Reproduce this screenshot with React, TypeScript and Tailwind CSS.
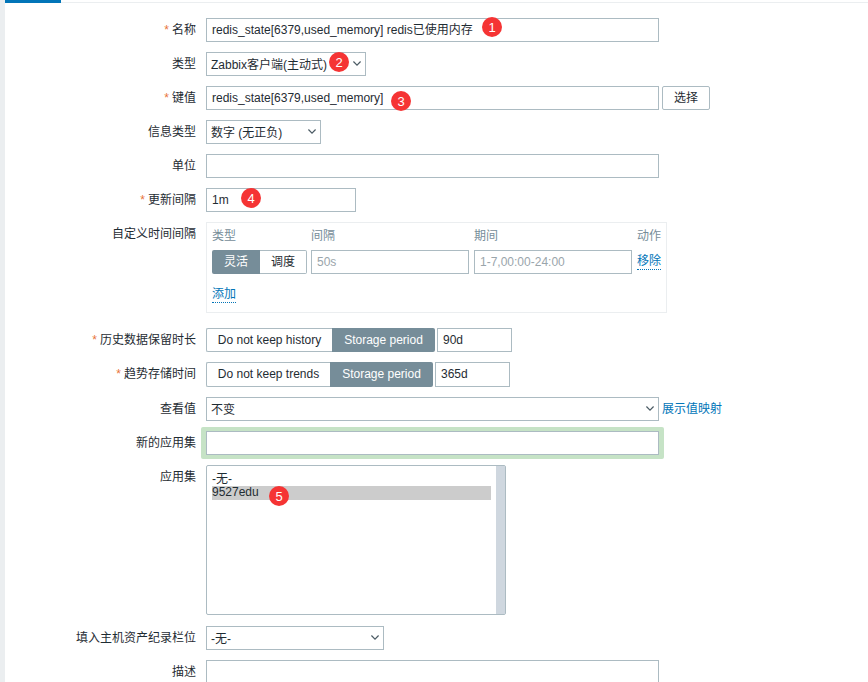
import React from 'react';

const font = { fontFamily: '"Liberation Sans", "Noto Sans CJK SC", sans-serif' };

function Chevron() {
  return (
    <svg className="absolute right-[4px] top-[8px]" width="8" height="5" viewBox="0 0 8 5" fill="none">
      <path d="M0.4 0.5 L4 4.1 L7.6 0.5" stroke="#4b5b64" strokeWidth="1.2" />
    </svg>
  );
}

function Badge({ n, className }: { n: number; className: string }) {
  return (
    <span
      className={`absolute z-10 flex h-5 w-5 items-center justify-center rounded-full bg-[#f53434] text-[13px] leading-none text-white ${className}`}
    >
      {n}
    </span>
  );
}

function Row({ label, req, className = '', labelClass = 'pt-[3px]', children }: { label: string; req?: boolean; className?: string; labelClass?: string; children: React.ReactNode }) {
  return (
    <div className={`flex ${className}`}>
      <div className={`mr-[10px] w-[196px] shrink-0 text-right leading-[18px] ${labelClass}`}>
        {req && <span className="mr-[3px] text-[#e8743a]">*</span>}
        {label}
      </div>
      <div className="relative flex min-w-0 flex-1">{children}</div>
    </div>
  );
}

function Field({ w, value, placeholder }: { w: string; value?: string; placeholder?: boolean }) {
  return (
    <div className={`flex h-6 items-center border border-[#acbbc2] bg-white pl-[5px] leading-none ${w} ${placeholder ? 'text-[#9aa5ab]' : ''}`}>
      {value}
    </div>
  );
}

function Select({ w, value }: { w: string; value: string }) {
  return (
    <div className={`relative flex h-6 items-center border border-[#acbbc2] bg-white pl-[4px] pt-[1px] leading-none ${w}`}>
      {value}
      <Chevron />
    </div>
  );
}

function Toggle({ off, offW, onW, pad = '' }: { off: string; offW: string; onW: string; pad?: string }) {
  return (
    <div className="flex h-full">
      <div className={`flex items-center justify-center rounded-l-[2px] border border-r-0 border-[#acbbc2] bg-white ${offW} ${pad}`}>{off}</div>
      <div className={`flex items-center justify-center rounded-r-[2px] bg-[#768d99] text-white ${onW} ${pad}`}>Storage period</div>
    </div>
  );
}

export default function App() {
  return (
    <div className="flex h-[682px] w-[868px] overflow-hidden bg-white text-[12px] text-[#1f2c33]" style={font}>
      <div className="w-[5px] shrink-0 bg-[#ebeef0]" />
      <div className="min-w-0 flex-1">
        {/* tab strip */}
        <div className="h-[3px] border-b border-[#ebeef0]">
          <div className="h-[3px] w-[56px] bg-[#0275b8]" />
        </div>

        <div className="-ml-[5px] pt-[15px]">
          <Row label="名称" req>
            <Field w="w-[453px]" value="redis_state[6379,used_memory] redis已使用内存" />
            <Badge n={1} className="left-[276px] top-[-1px]" />
          </Row>

          <Row label="类型" className="mt-[10px]">
            <Select w="w-[160px]" value="Zabbix客户端(主动式)" />
            <Badge n={2} className="left-[123px] top-0" />
          </Row>

          <Row label="键值" req className="mt-[10px]">
            <Field w="w-[453px]" value="redis_state[6379,used_memory]" />
            <div className="ml-[3px] flex h-6 w-[48px] items-center justify-center rounded-[2px] border border-[#acbbc2] bg-white">选择</div>
            <Badge n={3} className="left-[185px] top-[5px]" />
          </Row>

          <Row label="信息类型" className="mt-[10px]">
            <Select w="w-[115px]" value="数字 (无正负)" />
          </Row>

          <Row label="单位" className="mt-[10px]">
            <Field w="w-[453px]" />
          </Row>

          <Row label="更新间隔" req className="mt-[10px]">
            <Field w="w-[150px]" value="1m" />
            <Badge n={4} className="left-[35px] top-0" />
          </Row>

          <Row label="自定义时间间隔" className="mt-[10px]">
            <div className="h-[91px] w-[461px] border border-[#ebeef0] pl-[5px] pt-[5px]">
              <div className="flex h-[16px] items-center text-[#768d99]">
                <span className="w-[99px]">类型</span>
                <span className="w-[163px]">间隔</span>
                <span className="w-[163px]">期间</span>
                <span>动作</span>
              </div>
              <div className="mt-[6px] flex h-6 items-center">
                <div className="flex h-full w-[95px]">
                  <div className="flex w-[48px] items-center justify-center rounded-l-[2px] bg-[#768d99] text-white">灵活</div>
                  <div className="flex flex-1 items-center justify-center rounded-r-[2px] border border-l-0 border-[#acbbc2] bg-white">调度</div>
                </div>
                <div className="ml-[4px]"><Field w="w-[158px]" value="50s" placeholder /></div>
                <div className="ml-[5px]"><Field w="w-[158px]" value="1-7,00:00-24:00" placeholder /></div>
                <span className="ml-[5px] border-b border-dotted border-[#0275b8] leading-[15px] text-[#0275b8]">移除</span>
              </div>
              <div className="mt-[11px]">
                <span className="inline-block border-b border-dotted border-[#0275b8] leading-[15px] text-[#0275b8]">添加</span>
              </div>
            </div>
          </Row>

          <Row label="历史数据保留时长" req className="mt-[15px]">
            <div className="flex h-6">
              <Toggle off="Do not keep history" offW="w-[126px]" onW="w-[103px]" />
              <div className="ml-[2px]"><Field w="w-[75px]" value="90d" /></div>
            </div>
          </Row>

          <Row label="趋势存储时间" req className="mt-[10px]">
            <div className="flex h-[25px]">
              <Toggle off="Do not keep trends" offW="w-[124px]" onW="w-[103px]" pad="pb-[1px]" />
              <div className="ml-[2px] flex h-[25px] w-[75px] items-center border border-[#acbbc2] bg-white pb-[1px] pl-[5px]">365d</div>
            </div>
          </Row>

          <Row label="查看值" className="mt-[10px]">
            <Select w="w-[453px]" value="不变" />
            <span className="ml-[3px] pt-[5px] leading-[15px] text-[#0275b8]">展示值映射</span>
          </Row>

          <Row label="新的应用集" labelClass="pt-[7px]" className="mt-[6px]">
            <div className="absolute left-[-5px] top-0 h-[32px] w-[463px] rounded-[2px] bg-[#c6e3c6]" />
            <div className="relative mt-[4px]">
              <div className="h-6 w-[453px] border border-[#acbbc2] bg-white" />
            </div>
            <div className="h-[32px]" />
          </Row>

          <Row label="应用集" className="mt-[6px]">
            <div className="relative h-[150px] w-[300px] rounded-[2px] border border-[#acbbc2] bg-white pl-[5px] pt-[6px]">
              <div className="h-[14px] w-[279px] leading-[14px]">-无-</div>
              <div className="h-[14px] w-[279px] bg-[#cccccc] leading-[13px]">9527edu</div>
              <div className="absolute bottom-0 right-0 top-0 w-[9px] bg-[#cfd7df]" />
            </div>
            <Badge n={5} className="left-[63px] top-[21px]" />
          </Row>

          <Row label="填入主机资产纪录栏位" className="mt-[11px]">
            <Select w="w-[178px]" value="-无-" />
          </Row>

          <Row label="描述" className="mt-[10px]">
            <div className="h-[60px] w-[453px] border border-[#acbbc2] bg-white" />
          </Row>
        </div>
      </div>
    </div>
  );
}
